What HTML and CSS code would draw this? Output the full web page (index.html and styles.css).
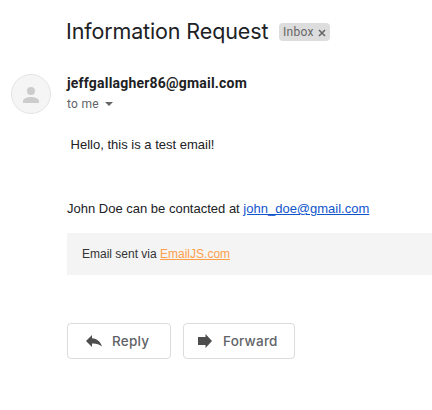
FILE: index.html
```html
<!DOCTYPE html>
<html lang="en">
<head>
<meta charset="utf-8">
<title>Information Request</title>
<link rel="stylesheet" href="styles.css">
</head>
<body>
<main class="mail">
  <header class="subject">
    <h1 class="title">Information Request</h1>
    <span class="label">Inbox<svg class="close" viewBox="0 0 8 8"><path d="M1 1l6 6M7 1L1 7"/></svg></span>
  </header>
  <section class="sender">
    <div class="avatar"><svg viewBox="0 0 16 16"><circle cx="8" cy="4" r="4"/><path d="M0 16v-2c0-2.700 5.300-4 8-4s8 1.300 8 4v2z"/></svg></div>
    <div class="who">
      <div class="address">jeffgallagher86@gmail.com</div>
      <div class="recipient">to me<span class="caret"></span></div>
    </div>
  </section>
  <article class="body">
    <p class="greeting">&nbsp;Hello, this is a test email!</p>
    <p class="contact">John Doe can be contacted at <a href="mailto:john_doe@gmail.com">john_doe@gmail.com</a></p>
    <div class="via"><span>Email sent via <a href="#">EmailJS.com</a></span></div>
  </article>
  <footer class="actions">
    <button class="reply"><svg viewBox="0 0 16 12"><path d="M6 0v3.300c5 .5 8.500 3.200 10 8.200-2.800-2.400-5.800-3.200-10-3V12L0 6z"/></svg><span>Reply</span></button>
    <button class="forward"><svg viewBox="0 0 14 14"><path d="M0 3h7.500V0L14 7l-6.500 7v-3H0z"/></svg><span>Forward</span></button>
  </footer>
</main>
</body>
</html>
```
FILE: styles.css
```css
* { box-sizing: border-box; }
body { margin: 0; background: #fff; color: #202124; overflow: hidden; }
.mail { width: 432px; height: 410px; padding-top: 18px; }
.subject { display: flex; align-items: center; height: 28px; padding-left: 66px; }
.title { margin: 0; width: 213px; padding-bottom: 2px; font: 400 21.5px/26px Inter, sans-serif; letter-spacing: -0.13px; white-space: nowrap; }
.label { display: flex; align-items: center; justify-content: space-between; width: 51px; height: 18px; padding: 0 4px 0 4px; border-radius: 4px; background: #ddd; color: #666; font: 12px/18px Roboto, sans-serif; letter-spacing: 0.3px; }
.close { width: 8px; height: 8px; margin-top: 1px; fill: none; stroke: #666; stroke-width: 1.6; }
.sender { display: flex; margin-top: 28px; padding-left: 11px; height: 40px; }
.avatar { display: flex; align-items: center; justify-content: center; width: 40px; height: 40px; border: 1px solid #e4e4e4; border-radius: 50%; background: #f5f5f5; }
.avatar svg { width: 16px; height: 16px; margin-top: 1px; fill: #ccc; }
.who { padding-left: 16px; }
.address { margin-top: -1px; padding-bottom: 1px; font: 700 14px/20px Roboto, sans-serif; letter-spacing: 0.2px; }
.recipient { display: flex; align-items: center; color: #5f6368; font: 12px/20px Roboto, sans-serif; letter-spacing: 0.3px; }
.caret { margin-left: 6px; border: 4px solid transparent; border-top-color: #666; border-bottom: 0; }
.body { padding-left: 67px; font: 13px/20px "Liberation Sans", Arial, sans-serif; }
.body p { margin: 0; white-space: nowrap; }
.greeting { padding-top: 21px; }
.contact { padding-top: 44px; }
.contact a { color: #15c; }
.via { display: flex; align-items: center; height: 42px; margin-top: 14px; padding-left: 15px; background: #f4f4f4; color: #333; font-size: 12px; }
.via a { color: #ff9f4a; }
.actions { display: flex; gap: 12px; margin-top: 48px; padding-left: 67px; }
.actions button { display: flex; align-items: center; height: 36px; border: 1px solid #dadce0; border-radius: 4px; background: #fff; color: #5f6368; font: 450 13.5px/20px Inter, sans-serif; letter-spacing: 0.22px; }
.actions span { margin-top: -1px; }
.actions svg { fill: #4d4d4d; }
.actions .reply { width: 104px; padding: 0 0 0 18px; }
.actions .forward { width: 112px; padding: 0 0 0 14px; }
.reply svg { width: 16px; height: 12px; margin-right: 10px; }
.forward svg { width: 14px; height: 14px; margin-right: 11px; }
```
